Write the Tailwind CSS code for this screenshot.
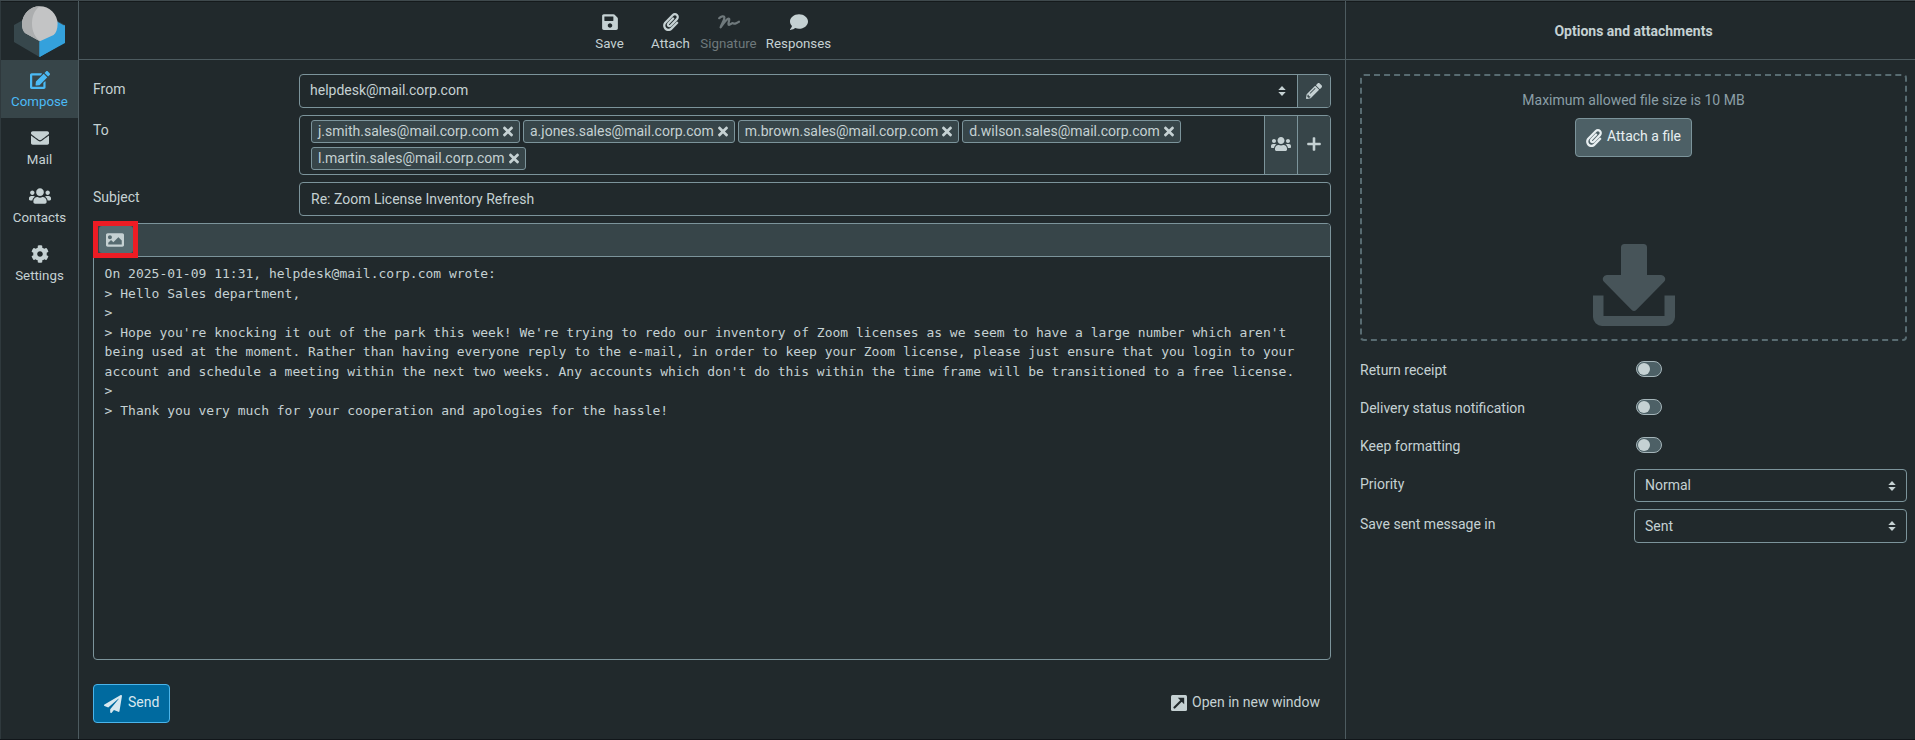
<!DOCTYPE html>
<html lang="en">
<head>
<meta charset="utf-8">
<title>Compose</title>
<script src="https://cdn.jsdelivr.net/npm/@tailwindcss/browser@4"></script>
</head>
<body class="h-[740px] w-[1915px] overflow-hidden bg-[#21292c] font-['Roboto',sans-serif] text-[14px] leading-[21px] text-[#c5d1d3]">
<svg class="hidden">
<symbol id="edit" viewBox="0 0 576 512"><path d="M402.6 83.2l90.2 90.2c3.8 3.8 3.8 10 0 13.8L274.4 405.6l-92.8 10.3c-12.4 1.4-22.9-9.1-21.5-21.5l10.3-92.8L388.8 83.2c3.8-3.8 10-3.8 13.8 0zm162-22.9l-48.8-48.8c-15.2-15.2-39.9-15.2-55.2 0l-35.4 35.4c-3.8 3.8-3.8 10 0 13.8l90.2 90.2c3.8 3.8 10 3.8 13.8 0l35.4-35.4c15.2-15.3 15.2-40 0-55.2zM384 346.2V448H64V128h229.8c3.2 0 6.2-1.3 8.5-3.5l40-40c7.6-7.6 2.2-20.5-8.5-20.5H48C21.5 64 0 85.5 0 112v352c0 26.5 21.5 48 48 48h352c26.5 0 48-21.5 48-48V306.2c0-10.7-12.9-16-20.5-8.5l-40 40c-2.2 2.3-3.5 5.3-3.5 8.5z"/></symbol>
<symbol id="mail" viewBox="0 0 512 512"><path d="M502.3 190.8c3.9-3.1 9.7-.2 9.7 4.7V400c0 26.5-21.5 48-48 48H48c-26.5 0-48-21.5-48-48V195.6c0-5 5.7-7.8 9.7-4.7 22.4 17.4 52.1 39.5 154.1 113.6 21.1 15.4 56.7 47.8 92.2 47.6 35.7.3 72-32.8 92.3-47.6 102-74.1 131.6-96.3 154-113.7zM256 320c23.2.4 56.6-29.2 73.4-41.4 132.7-96.3 142.8-104.7 173.4-128.7 5.8-4.5 9.2-11.5 9.2-18.9v-19c0-26.5-21.5-48-48-48H48c-26.5 0-48 21.5-48 48v19c0 7.4 3.4 14.3 9.2 18.9 30.6 23.9 40.7 32.4 173.4 128.7 16.8 12.2 50.2 41.8 73.4 41.4z"/></symbol>
<symbol id="users" viewBox="0 0 640 512"><path d="M96 224c35.3 0 64-28.7 64-64s-28.7-64-64-64-64 28.7-64 64 28.7 64 64 64zm448 0c35.3 0 64-28.7 64-64s-28.7-64-64-64-64 28.7-64 64 28.7 64 64 64zm32 32h-64c-17.6 0-33.5 7.1-45.1 18.6 40.3 22.1 68.9 62 75.1 109.4h66c17.7 0 32-14.3 32-32v-32c0-35.3-28.7-64-64-64zm-256 0c61.9 0 112-50.1 112-112S381.9 32 320 32 208 82.1 208 144s50.1 112 112 112zm76.8 32h-8.3c-20.8 10-43.9 16-68.5 16s-47.6-6-68.5-16h-8.3C179.6 288 128 339.6 128 403.2V432c0 26.5 21.5 48 48 48h288c26.5 0 48-21.5 48-48v-28.8c0-63.6-51.6-115.2-115.2-115.2zm-223.7-13.4C161.5 263.1 145.6 256 128 256H64c-35.3 0-64 28.7-64 64v32c0 17.7 14.3 32 32 32h65.9c6.3-47.4 34.9-87.3 75.2-109.4z"/></symbol>
<symbol id="cog" viewBox="0 0 512 512"><path d="M487.4 315.7l-42.6-24.6c4.3-23.2 4.3-47 0-70.2l42.6-24.6c4.9-2.8 7.1-8.6 5.5-14-11.1-35.6-30-67.8-54.7-94.6-3.8-4.1-10-5.1-14.8-2.3L380.8 110c-17.9-15.4-38.5-27.3-60.8-35.1V25.8c0-5.6-3.9-10.5-9.4-11.7-36.7-8.2-74.3-7.8-109.2 0-5.5 1.2-9.4 6.1-9.4 11.7V75c-22.2 7.9-42.8 19.8-60.8 35.1L88.7 85.5c-4.9-2.8-11-1.9-14.8 2.3-24.7 26.7-43.6 58.9-54.7 94.6-1.7 5.4.6 11.2 5.5 14L67.3 221c-4.3 23.2-4.3 47 0 70.2l-42.6 24.6c-4.9 2.8-7.1 8.6-5.5 14 11.1 35.6 30 67.8 54.7 94.6 3.8 4.1 10 5.1 14.8 2.3l42.6-24.6c17.9 15.4 38.5 27.3 60.8 35.1v49.2c0 5.6 3.9 10.5 9.4 11.7 36.7 8.2 74.3 7.8 109.2 0 5.5-1.2 9.4-6.1 9.4-11.7v-49.2c22.2-7.9 42.8-19.8 60.8-35.1l42.6 24.6c4.9 2.8 11 1.9 14.8-2.3 24.7-26.7 43.6-58.9 54.7-94.6 1.5-5.5-.7-11.3-5.6-14.1zM256 336c-44.1 0-80-35.9-80-80s35.9-80 80-80 80 35.9 80 80-35.9 80-80 80z"/></symbol>
<symbol id="save" viewBox="0 0 448 512"><path d="M433.941 129.941l-83.882-83.882A48 48 0 0 0 316.118 32H48C21.49 32 0 53.49 0 80v352c0 26.51 21.49 48 48 48h352c26.51 0 48-21.49 48-48V163.882a48 48 0 0 0-14.059-33.941zM224 416c-35.346 0-64-28.654-64-64 0-35.346 28.654-64 64-64s64 28.654 64 64c0 35.346-28.654 64-64 64zm96-304.52V212c0 6.627-5.373 12-12 12H76c-6.627 0-12-5.373-12-12V108c0-6.627 5.373-12 12-12h228.52c3.183 0 6.235 1.264 8.485 3.515l3.48 3.48A11.996 11.996 0 0 1 320 111.48z"/></symbol>
<symbol id="clip" viewBox="0 0 448 512"><path d="M43.246 466.142c-58.43-60.289-57.341-157.511 1.386-217.581L254.392 34c44.316-45.332 116.351-45.336 160.671 0 43.89 44.894 43.943 117.329 0 162.276L232.214 383.128c-29.855 30.537-78.633 30.111-107.982-.998-28.275-29.97-27.368-77.473 1.452-106.953l143.743-146.835c6.182-6.314 16.312-6.422 22.626-.241l22.861 22.379c6.315 6.182 6.422 16.312.241 22.626L171.427 319.927c-4.932 5.045-5.236 13.428-.648 18.292 4.372 4.634 11.245 4.711 15.688.165l182.849-186.851c19.613-20.062 19.613-52.725-.011-72.798-19.189-19.627-49.957-19.637-69.154 0L90.39 293.295c-34.763 35.56-35.299 93.12-1.191 128.313 34.01 35.093 88.985 35.137 123.058.286l172.06-175.999c6.177-6.319 16.307-6.433 22.626-.256l22.877 22.364c6.319 6.177 6.434 16.307.256 22.626l-172.06 175.998c-59.576 60.938-155.943 60.216-214.77-.485z"/></symbol>
<symbol id="sign" viewBox="0 0 22 14"><path d="M1.2 3.2C3 1.2 6.2 .6 6.4 2.6 6.6 5 3.2 9.500 2.600 12.400 5 9 8.500 3.800 10.600 3.600 12.600 3.600 9.200 9.600 11 9.800 12.600 9.900 13.300 8.200 14.600 8.200 15.800 8.200 15.800 9 17.200 8.600 18.600 8.200 20 7.300 21 6.700" fill="none" stroke="currentColor" stroke-width="2.200" stroke-linecap="round" stroke-linejoin="round"/></symbol>
<symbol id="comment" viewBox="0 0 512 512"><path d="M256 32C114.6 32 0 125.1 0 240c0 49.6 21.4 95 57 130.7C44.5 421.1 2.7 466 2.2 466.5c-2.2 2.3-2.8 5.7-1.5 8.7S4.8 480 8 480c66.3 0 116-31.8 140.6-51.4 32.7 12.3 69 19.4 107.4 19.4 141.4 0 256-93.1 256-208S397.4 32 256 32z"/></symbol>
<symbol id="pencil" viewBox="0 0 512 512"><path d="M497.9 142.1l-46.1 46.1c-4.7 4.7-12.3 4.7-17 0l-111-111c-4.7-4.7-4.7-12.3 0-17l46.1-46.1c18.7-18.7 49.1-18.7 67.9 0l60.1 60.1c18.8 18.7 18.8 49.1 0 67.9zM284.2 99.8L21.6 362.4.4 483.9c-2.9 16.4 11.4 30.6 27.8 27.8l121.5-21.3 262.6-262.6c4.7-4.7 4.7-12.3 0-17l-111-111c-4.8-4.7-12.4-4.7-17.1 0zM124.1 339.9c-5.5-5.5-5.5-14.3 0-19.8l154-154c5.5-5.5 14.3-5.5 19.8 0s5.5 14.3 0 19.8l-154 154c-5.5 5.5-14.3 5.5-19.8 0zM88 424h48v36.3l-64.5 11.3-31.1-31.1L51.700 376H88v48z"/></symbol>
<symbol id="image" viewBox="0 0 512 512"><path d="M464 448H48c-26.51 0-48-21.49-48-48V112c0-26.51 21.49-48 48-48h416c26.51 0 48 21.49 48 48v288c0 26.51-21.49 48-48 48zM112 120c-30.928 0-56 25.072-56 56s25.072 56 56 56 56-25.072 56-56-25.072-56-56-56zM64 384h384V272l-87.515-87.515c-4.686-4.686-12.284-4.686-16.971 0L208 320l-55.515-55.515c-4.686-4.686-12.284-4.686-16.971 0L64 336v48z"/></symbol>
<symbol id="plane" viewBox="0 0 512 512"><path d="M476 3.2L12.5 270.6c-18.1 10.4-15.8 35.6 2.2 43.2L121 358.4l287.3-253.2c5.5-4.9 13.3 2.6 8.6 8.3L176 407v80.500c0 23.6 28.5 32.9 42.5 15.8L282 426l124.6 52.2c14.2 6 30.4-2.9 33-18.2l72-432C515 7.8 493.3-6.8 476 3.2z"/></symbol>
<symbol id="times" viewBox="0 0 352 512"><path d="M242.72 256l100.07-100.07c12.28-12.28 12.28-32.19 0-44.48l-22.24-22.24c-12.28-12.28-32.19-12.28-44.48 0L176 189.28 75.93 89.21c-12.28-12.28-32.19-12.28-44.48 0L9.21 111.45c-12.28 12.28-12.28 32.19 0 44.48L109.28 256 9.21 356.07c-12.28 12.28-12.28 32.19 0 44.48l22.24 22.24c12.28 12.28 32.2 12.28 44.48 0L176 322.72l100.07 100.07c12.28 12.28 32.2 12.28 44.48 0l22.24-22.24c12.28-12.28 12.28-32.19 0-44.48L242.72 256z"/></symbol>
<symbol id="sort" viewBox="0 0 8 10"><path d="M4 0L7.700 4H.3zM4 10L.3 6H7.700z"/></symbol>
<symbol id="plus" viewBox="0 0 14 14"><path d="M5.700 1a.8.8 0 0 1 .8-.8h1a.8.8 0 0 1 .8.8v4.700h4.700a.8.8 0 0 1 .8.8v1a.8.8 0 0 1-.8.8H8.300V13a.8.8 0 0 1-.8.8h-1a.8.8 0 0 1-.8-.8V8.300H1a.8.8 0 0 1-.8-.8v-1a.8.8 0 0 1 .8-.8h4.700z"/></symbol>
<symbol id="ext" viewBox="0 0 16 16"><rect width="16" height="16" rx="1.500"/><path d="M3.500 12.500L10.500 5.500" stroke="#21292c" stroke-width="2.200" stroke-linecap="round"/><path d="M6.800 2.800H13.200V9.200z" fill="#21292c"/></symbol>
<symbol id="download" viewBox="0 0 82 82"><path d="M31.500 0h19a3.500 3.500 0 0 1 3.500 3.500V31h14a4 4 0 0 1 2.800 7L43.500 65.800a3.500 3.500 0 0 1-5 0L11.200 38a4 4 0 0 1 2.800-7H28V3.500A3.500 3.500 0 0 1 31.500 0z"/><path d="M0 51.500H10.500V72H71.500V51.500H82V73a9 9 0 0 1-9 9H9a9 9 0 0 1-9-9z"/></symbol>
</svg>
<div class="flex h-full flex-col border-t border-[#3f494d] shadow-[inset_0_1px_0_#151a1c]">
<div class="flex min-h-0 flex-1">
  <nav class="flex w-[79px] shrink-0 flex-col border-l border-r border-l-[#2f393d] border-r-[#4d5b60] text-center text-[13.3px] leading-[18px]">
    <div class="flex h-[59px] items-start justify-center pt-[5px]">
      <svg class="h-[51px] w-[51px]" viewBox="0 0 51 51"><path d="M0 19L25.500 5 51 19V36L25.500 51 0 36z" fill="#37474c"/><path d="M25.500 36L51 19V36L25.500 51z" fill="#34a1dc"/><path d="M42 15l9 5v17L25.500 51V35z" fill="#34a1dc"/><path d="M8 18a17.800 17.800 0 0 1 35.600 0c0 5-1.600 9-4 11L25.900 35.300 11 27c-2-2-3-5-3-9z" fill="#c3c4c5"/><path d="M25.900 35.300L11 27c-2-2-3-5-3-9A17.800 17.800 0 0 1 25.900.2C20 4 18 11 18 18c0 7 3 13 7.900 17.300z" fill="#acaeaf"/></svg>
    </div>
    <div class="flex h-[58px] flex-col items-center bg-[#374549] pt-[11px] text-[#4bbaf5]"><svg class="h-[18px] w-[20px]" fill="currentColor"><use href="#edit"/></svg><span class="mt-[4px]">Compose</span></div>
    <div class="flex h-[58px] flex-col items-center pt-[11px]"><svg class="h-[18px] w-[18px]" fill="currentColor"><use href="#mail"/></svg><span class="mt-[4px]">Mail</span></div>
    <div class="flex h-[58px] flex-col items-center pt-[11px]"><svg class="h-[18px] w-[22px]" fill="currentColor"><use href="#users"/></svg><span class="mt-[4px]">Contacts</span></div>
    <div class="flex h-[58px] flex-col items-center pt-[11px]"><svg class="h-[18px] w-[18px]" fill="currentColor"><use href="#cog"/></svg><span class="mt-[4px]">Settings</span></div>
  </nav>

  <main class="flex w-[1267px] shrink-0 flex-col border-r border-[#4d5b60]">
    <div class="flex h-[59px] shrink-0 justify-center border-b border-[#4d5b60] pr-[3px] pt-[12px] text-[13.300px] leading-[18px]">
      <div class="flex w-[60px] flex-col items-center"><svg class="h-[18px] w-[16px]" fill="currentColor"><use href="#save"/></svg><span class="mt-[4px]">Save</span></div>
      <div class="flex w-[62px] flex-col items-center"><svg class="h-[18px] w-[16px]" fill="currentColor"><use href="#clip"/></svg><span class="mt-[4px]">Attach</span></div>
      <div class="flex w-[54px] flex-col items-center text-[#6f797c]"><svg class="h-[18px] w-[22px]" fill="currentColor"><use href="#sign"/></svg><span class="mt-[4px]">Signature</span></div>
      <div class="flex w-[86px] flex-col items-center"><svg class="h-[18px] w-[18px]" fill="currentColor"><use href="#comment"/></svg><span class="mt-[4px]">Responses</span></div>
    </div>
    <div class="flex flex-1 flex-col pl-[14px] pr-[14px] pt-[14px]">
      <div class="flex h-[34px]">
        <label class="w-[206px] pt-[5px]">From</label>
        <div class="flex flex-1 overflow-hidden rounded-[4px] border border-[#7c949b]">
          <div class="flex flex-1 items-center justify-between pl-[10px] pr-[11px]"><span class="pb-px">helpdesk@mail.corp.com</span><svg class="h-[10px] w-[8px]" fill="currentColor"><use href="#sort"/></svg></div>
          <div class="flex w-[33px] items-center justify-center border-l border-[#7c949b] bg-[#374549]"><svg class="mb-px h-4 w-4" fill="currentColor"><use href="#pencil"/></svg></div>
        </div>
      </div>
      <div class="mt-[7px] flex h-[60px]">
        <label class="w-[206px] pt-[5px]">To</label>
        <div class="flex flex-1 overflow-hidden rounded-[4px] border border-[#7c949b]">
          <div class="flex flex-1 flex-wrap content-start gap-x-[3px] gap-y-1 pl-[11px] pt-1">
            <div class="flex h-[23px] items-center gap-[4px] rounded-[3px] border border-[#7c949b] bg-[#374549] px-[6px]"><span>j.smith.sales@mail.corp.com</span><svg class="h-[15px] w-[10px]" fill="currentColor"><use href="#times"/></svg></div>
            <div class="flex h-[23px] items-center gap-[4px] rounded-[3px] border border-[#7c949b] bg-[#374549] px-[6px]"><span>a.jones.sales@mail.corp.com</span><svg class="h-[15px] w-[10px]" fill="currentColor"><use href="#times"/></svg></div>
            <div class="flex h-[23px] items-center gap-[4px] rounded-[3px] border border-[#7c949b] bg-[#374549] px-[6px]"><span>m.brown.sales@mail.corp.com</span><svg class="h-[15px] w-[10px]" fill="currentColor"><use href="#times"/></svg></div>
            <div class="flex h-[23px] items-center gap-[4px] rounded-[3px] border border-[#7c949b] bg-[#374549] px-[6px]"><span>d.wilson.sales@mail.corp.com</span><svg class="h-[15px] w-[10px]" fill="currentColor"><use href="#times"/></svg></div>
            <div class="flex h-[23px] items-center gap-[4px] rounded-[3px] border border-[#7c949b] bg-[#374549] px-[6px]"><span>l.martin.sales@mail.corp.com</span><svg class="h-[15px] w-[10px]" fill="currentColor"><use href="#times"/></svg></div>
          </div>
          <div class="flex w-[33px] items-center justify-center border-l border-[#7c949b] bg-[#374549]"><svg class="mb-[2px] h-4 w-5" fill="currentColor"><use href="#users"/></svg></div>
          <div class="flex w-[33px] items-center justify-center border-l border-[#7c949b] bg-[#374549]"><svg class="mb-[2px] h-[14px] w-[14px]" fill="currentColor"><use href="#plus"/></svg></div>
        </div>
      </div>
      <div class="mt-[7px] flex h-[34px]">
        <label class="w-[206px] pt-[5px]">Subject</label>
        <div class="flex flex-1 items-center rounded-[4px] border border-[#7c949b] pl-[11px]">Re: Zoom License Inventory Refresh</div>
      </div>
      <div class="mt-[7px] flex h-[437px] flex-col rounded-[4px] border border-[#7c949b]">
        <div class="relative h-[33px] shrink-0 rounded-t-[3px] border-b border-[#7c949b] bg-[#374549]">
          <div class="absolute -left-px -top-[3px] flex h-[37px] w-[45px] items-center justify-center border-[5px] border-[#ed1c24] bg-[#374549]"><div class="flex h-[27px] w-[34px] items-center justify-center rounded-[3px] bg-[#566b71] pr-px"><svg class="h-[18px] w-[18px]" fill="currentColor"><use href="#image"/></svg></div></div>
        </div>
        <div class="whitespace-pre pl-[10.6px] pt-[7px] font-['DejaVu_Sans_Mono',monospace] text-[13px] leading-[19.5px]">On 2025-01-09 11:31, helpdesk@mail.corp.com wrote:
&gt; Hello Sales department,
&gt;
&gt; Hope you're knocking it out of the park this week! We're trying to redo our inventory of Zoom licenses as we seem to have a large number which aren't
being used at the moment. Rather than having everyone reply to the e-mail, in order to keep your Zoom license, please just ensure that you login to your
account and schedule a meeting within the next two weeks. Any accounts which don't do this within the time frame will be transitioned to a free license.
&gt;
&gt; Thank you very much for your cooperation and apologies for the hassle!</div>
      </div>
      <div class="mt-6 flex h-[39px] items-center justify-between pr-[11px]">
        <button class="flex h-[39px] w-[77px] items-center gap-[6px] rounded-[4px] border border-[#4bb4ea] bg-[#006a9f] pl-[10px] pb-[3px] text-[#d8e8ef]"><svg class="mt-[3px] h-[18px] w-[18px]" fill="currentColor"><use href="#plane"/></svg>Send</button>
        <div class="flex items-center gap-[5px] pb-[3px]"><svg class="mt-[2px] h-[16px] w-[16px]" fill="currentColor"><use href="#ext"/></svg>Open in new window</div>
      </div>
    </div>
  </main>

  <aside class="flex flex-1 flex-col">
    <div class="flex h-[59px] shrink-0 items-center justify-center border-b border-[#4d5b60] pl-[6px] pt-[2px] font-bold">Options and attachments</div>
    <div class="flex flex-col pl-[14px] pr-[8px] pt-[14px]">
      <div class="flex h-[267px] flex-col items-center rounded-[4px] border-2 border-dashed border-[#586b71] pt-[14px]">
        <div class="text-[#8b9fa7]">Maximum allowed file size is 10 MB</div>
        <button class="mt-[7px] flex h-[39px] w-[117px] items-center justify-center gap-[5px] rounded-[4px] border border-[#7c949b] bg-[#4d6066] pb-[3px] text-[#e8eff1]"><svg class="mt-[3px] h-[18px] w-[16px]" fill="currentColor"><use href="#clip"/></svg>Attach a file</button>
        <svg class="ml-px mt-[87px] h-[82px] w-[82px] shrink-0 text-[#475459]" fill="currentColor"><use href="#download"/></svg>
      </div>
      <div class="flex h-[38px] pt-[19px]"><span class="w-[276px]">Return receipt</span><span class="mt-px flex h-4 w-[26px] shrink-0 items-center rounded-full border border-[#a5b5ba] bg-[#4d6066] pl-px"><i class="h-3 w-3 rounded-full bg-[#c5d1d3]"></i></span></div>
      <div class="flex h-[38px] pt-[19px]"><span class="w-[276px]">Delivery status notification</span><span class="mt-px flex h-4 w-[26px] shrink-0 items-center rounded-full border border-[#a5b5ba] bg-[#4d6066] pl-px"><i class="h-3 w-3 rounded-full bg-[#c5d1d3]"></i></span></div>
      <div class="flex h-[38px] pt-[19px]"><span class="w-[276px]">Keep formatting</span><span class="mt-px flex h-4 w-[26px] shrink-0 items-center rounded-full border border-[#a5b5ba] bg-[#4d6066] pl-px"><i class="h-3 w-3 rounded-full bg-[#c5d1d3]"></i></span></div>
      <div class="mt-[14px] flex h-[33px]"><span class="w-[274px] pt-[5px]">Priority</span><div class="flex flex-1 items-center justify-between rounded-[4px] border border-[#7c949b] pl-[10px] pr-[10px]"><span>Normal</span><svg class="h-[10px] w-[8px]" fill="currentColor"><use href="#sort"/></svg></div></div>
      <div class="mt-[7px] flex h-[34px]"><span class="w-[274px] pt-[5px]">Save sent message in</span><div class="flex flex-1 items-center justify-between rounded-[4px] border border-[#7c949b] pl-[10px] pr-[10px]"><span>Sent</span><svg class="h-[10px] w-[8px]" fill="currentColor"><use href="#sort"/></svg></div></div>
    </div>
  </aside>
</div>
<div class="h-px shrink-0 bg-[#11161a]"></div>
</div>
</body>
</html>
